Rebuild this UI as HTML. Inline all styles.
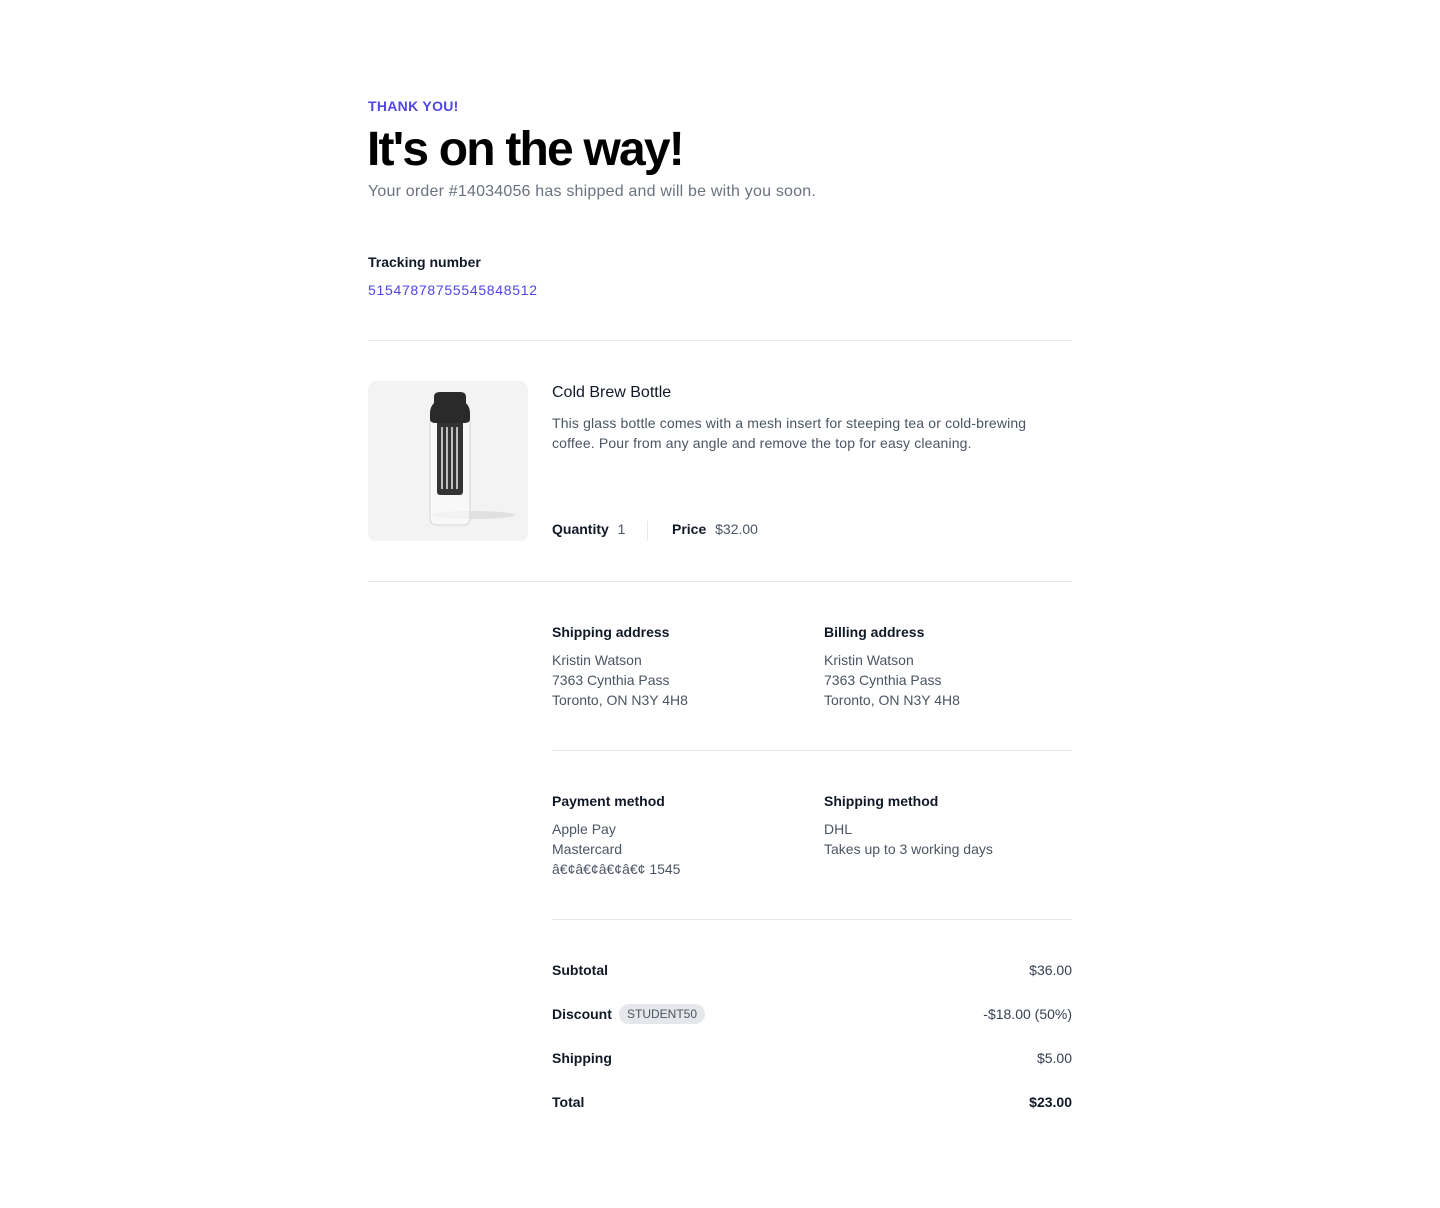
<!DOCTYPE html>
<html><head><meta charset="utf-8"><style>
*{margin:0;padding:0;box-sizing:border-box}
body{width:1440px;height:1208px;background:#fff;font-family:"Liberation Sans",Arial,sans-serif;color:#111827;position:relative;overflow:hidden}
.a{position:absolute;white-space:nowrap}
.hr{position:absolute;height:1px;background:#e5e7eb}
.m{font-size:14px;font-weight:600;color:#111827}
.g{font-size:14px;color:#4b5563;line-height:20px}
</style></head><body>
<div class="a" style="left:368px;top:98px;font-size:14px;font-weight:bold;color:#4f46e5;letter-spacing:0.3px">THANK YOU!</div>
<div class="a" style="left:367px;top:122px;font-size:48px;font-weight:900;letter-spacing:-1.8px;color:#000;line-height:56px">It's on the way!</div>
<div class="a" style="left:368px;top:183px;font-size:16px;color:#6b7280;letter-spacing:0.2px">Your order #14034056 has shipped and will be with you soon.</div>
<div class="a m" style="left:368px;top:254px">Tracking number</div>
<div class="a" style="left:368px;top:282px;font-size:14px;color:#4f46e5;letter-spacing:0.7px">51547878755545848512</div>
<div class="hr" style="left:368px;top:340px;width:704px"></div>
<div class="a" style="left:368px;top:381px;width:160px;height:160px;background:#f3f3f3;border-radius:8px">
<svg width="160" height="160" viewBox="0 0 160 160">
<ellipse cx="105" cy="134" rx="42" ry="4" fill="#e0e0e0"/>
<rect x="62" y="36" width="40" height="108" rx="6" fill="#fafafa" fill-opacity="0.7" stroke="#d6d6d6"/>
<rect x="69" y="38" width="26" height="76" rx="3" fill="#333"/>
<g stroke="#bdbdbd" stroke-width="2"><line x1="74" y1="46" x2="74" y2="108"/><line x1="79" y1="46" x2="79" y2="108"/><line x1="84" y1="46" x2="84" y2="108"/><line x1="89" y1="46" x2="89" y2="108"/></g>
<path d="M66 16 Q66 11 72 11 H92 Q98 11 98 16 V22 Q102 26 102 32 V38 Q102 42 96 42 H68 Q62 42 62 38 V32 Q62 26 66 22Z" fill="#2a2a2a"/>
</svg></div>
<div class="a" style="left:552px;top:384px;font-size:16px;color:#111827">Cold Brew Bottle</div>
<div class="a g" style="left:552px;top:413px;letter-spacing:0.15px">This glass bottle comes with a mesh insert for steeping tea or cold-brewing<br>coffee. Pour from any angle and remove the top for easy cleaning.</div>
<div class="a" style="left:552px;top:521px;font-size:14px"><span style="font-weight:600">Quantity</span> <span style="color:#4b5563;margin-left:5px">1</span></div>
<div class="a" style="left:647px;top:521px;width:1px;height:20px;background:#e5e7eb"></div>
<div class="a" style="left:672px;top:521px;font-size:14px"><span style="font-weight:600">Price</span> <span style="color:#4b5563;margin-left:5px">$32.00</span></div>
<div class="hr" style="left:368px;top:581px;width:704px"></div>
<div class="a m" style="left:552px;top:624px">Shipping address</div>
<div class="a g" style="left:552px;top:650px">Kristin Watson<br>7363 Cynthia Pass<br>Toronto, ON N3Y 4H8</div>
<div class="a m" style="left:824px;top:624px">Billing address</div>
<div class="a g" style="left:824px;top:650px">Kristin Watson<br>7363 Cynthia Pass<br>Toronto, ON N3Y 4H8</div>
<div class="hr" style="left:552px;top:750px;width:520px"></div>
<div class="a m" style="left:552px;top:793px">Payment method</div>
<div class="a g" style="left:552px;top:819px">Apple Pay<br>Mastercard<br>â€¢â€¢â€¢â€¢ 1545</div>
<div class="a m" style="left:824px;top:793px">Shipping method</div>
<div class="a g" style="left:824px;top:819px">DHL<br>Takes up to 3 working days</div>
<div class="hr" style="left:552px;top:919px;width:520px"></div>
<div class="a m" style="left:552px;top:962px">Subtotal</div>
<div class="a" style="right:368px;top:962px;font-size:14px;color:#374151">$36.00</div>
<div class="a m" style="left:552px;top:1006px">Discount</div>
<div class="a" style="left:619px;top:1004px;height:20px;padding:0 8px;border-radius:10px;background:#e5e7eb;font-size:12px;line-height:20px;color:#4b5563">STUDENT50</div>
<div class="a" style="right:368px;top:1006px;font-size:14px;color:#374151">-$18.00 (50%)</div>
<div class="a m" style="left:552px;top:1050px">Shipping</div>
<div class="a" style="right:368px;top:1050px;font-size:14px;color:#374151">$5.00</div>
<div class="a m" style="left:552px;top:1094px">Total</div>
<div class="a m" style="right:368px;top:1094px">$23.00</div>
</body></html>
